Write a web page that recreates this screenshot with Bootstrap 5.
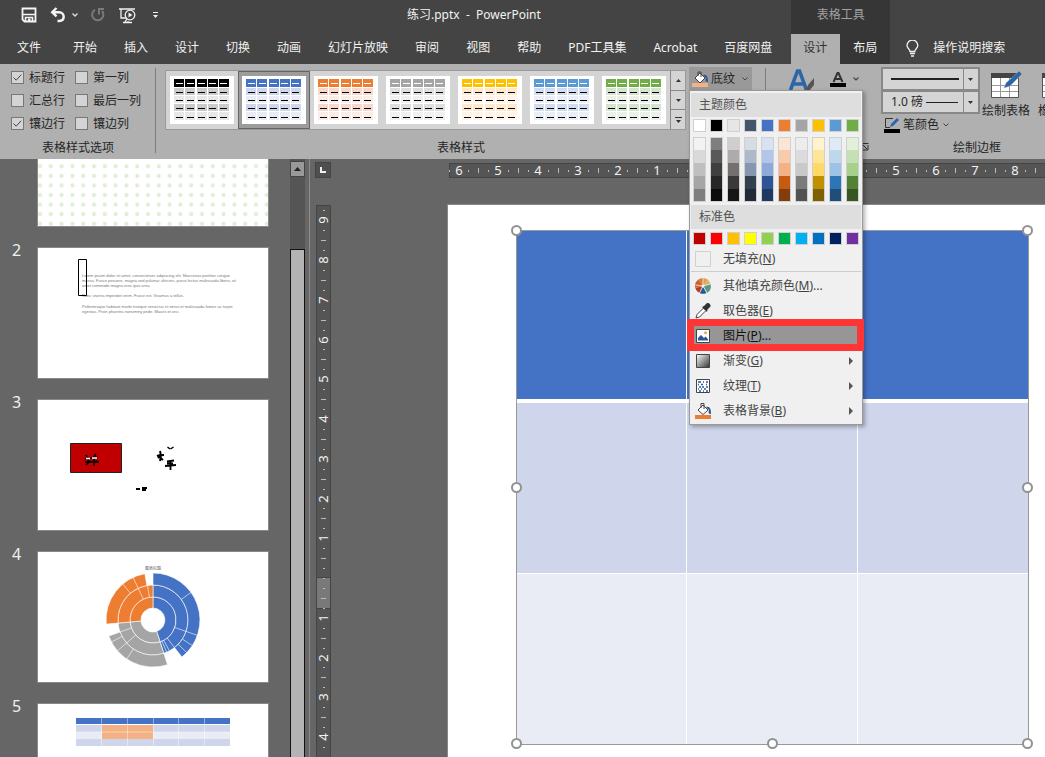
<!DOCTYPE html>
<html lang="zh-CN">
<head>
<meta charset="utf-8">
<meta name="viewport" content="width=device-width, initial-scale=1">
<title>练习.pptx - PowerPoint</title>
<link rel="stylesheet" href="https://cdn.jsdelivr.net/npm/bootstrap@5.3.0/dist/css/bootstrap.min.css">
<style>
:root{--chrome:#444;--ribbon:#b0b0b0;--desk:#666;--edge:#888;--soft:#d4d4d4}
body{font:12px/16px "Noto Sans","Noto Sans CJK SC",sans-serif;background:var(--desk);color:#262626}
button{font:inherit;color:inherit;border:0;background:none;padding:0}
svg{display:block;flex:none}
.app-head{background:var(--chrome);color:#f2f2f2}
.title-row{height:34px;padding:0 0 4px 20px}
.doc-title{margin-left:249px;white-space:pre}
.qat{gap:13px}
.tab-row{height:30px}
.main-tabs{padding-right:6px}
.tab-row .tab{display:flex;align-items:center;height:30px;padding:0 13px 2px 14px;color:inherit;text-decoration:none;white-space:nowrap}
.tab-row .tab.file-tab{padding:0 18px 2px 17px}
.context{background:#363636}
.context .title-row{padding-left:0;color:#a0a0a0}
.context .tab-row .tab{padding:0 13px 2px}
.context .tab-row .tab.on{padding-left:12px;background:var(--ribbon);color:#333}
.tell{gap:14px;padding:0 0 2px 16px}
.ribbon-bar{background:var(--ribbon);height:95px}
.rgroup{position:relative;flex:none;padding:3px 0}
.rgroup + .rgroup::before{content:"";position:absolute;left:-1px;top:4px;bottom:6px;width:1px;background:#7c7c7c}
.rlabel{height:16px;text-align:center;margin-top:auto;white-space:nowrap}
.g-options{width:156px}.g-styles{width:610px}.g-art{width:107px}
.opts{display:grid;grid-template-columns:64px 80px;padding-left:11px;margin-top:-1px}
.opts label{display:flex;align-items:center;gap:5px;height:23px;white-space:nowrap}
.opts input{appearance:none;width:13px;height:13px;margin:0;border:1px solid #777;background:var(--soft)}
.opts input:checked{background:var(--soft) url("data:image/svg+xml,%3Csvg xmlns='http://www.w3.org/2000/svg' viewBox='0 0 11 11'%3E%3Cpath d='M1.5 5.5l2.7 2.7 5-5.5' fill='none' stroke='%23444'/%3E%3C/svg%3E")}
.gallery{border:1px solid #999;background:var(--soft);height:60px;margin:3px 3px 0 9px}
.gallery .gal-item{width:72px;height:58px;padding:5px 4px;display:block}
.gallery .gal-item.on{background:#9c9c9c;outline:1px solid #666;outline-offset:-1px}
.gal-nav{border-left:1px solid #888;width:15px}
.gal-nav button{display:grid;place-items:center;flex:1}
.gal-nav button + button{border-top:1px solid #888}
.shade-btn{display:flex;align-items:center;gap:2px;background:#999;height:23px;width:63px;padding-left:3px;white-space:nowrap}
.fill-menu.dropdown-menu{display:block;left:0;top:23px;width:174px;min-width:0;padding:2px 1px 1px;margin:0;border:1px solid #999;border-radius:0;background:#f0f0f0;font-size:12px;color:#444;box-shadow:2px 2px 4px rgba(0,0,0,.3);z-index:20}
.menu-title{background:#dedede;height:24px;line-height:23px;padding-left:8px;color:#505050;margin:0;font-size:12px;font-weight:400}
.sw-row{display:flex;gap:4px;padding:2px 0 0 2px}
.sw-row.shades{padding:5px 0 3px 2px}
.sw-row.standard{padding:3px 0 1px 2px}
.sw-row .sw{width:13px;height:13px;border:1px solid #d0d0d0}
.shade-col{border:1px solid #d0d0d0;width:13px}
.shade-col .sh{display:block;width:11px;height:13px}
.shade-col .sh:first-child,.shade-col .sh:last-child{height:12px}
.fill-menu .fm{display:flex;align-items:center;width:100%;height:25px;padding:0 8px 0 4px;gap:12px;text-align:left;white-space:nowrap}
.fill-menu .fm .arr{margin-left:auto}
.fill-menu .fm.hot{position:relative;background:#969696;color:#111;z-index:1}
.fill-menu .fm.hot::after{content:"";position:absolute;left:-4px;right:-3px;top:-4px;bottom:-3px;border:7px solid #fd3535}
.fill-menu hr{margin:0 0 1px;opacity:1;color:#ccc}
.art-row{padding:1px 0 0 23px;gap:15px}
.pens{padding-left:8px}
.pen-color{gap:3px;padding:3px 0 0 3px}
.pen-sel{appearance:none;display:block;width:99px;height:24px;border:2px solid #888;border-radius:0;padding:0 0 0 8px;font:inherit;color:#262626;
 background:url("data:image/svg+xml,%3Csvg xmlns='http://www.w3.org/2000/svg' width='15' height='20'%3E%3Cpath d='M0 0h1v20H0z' fill='%23888'/%3E%3Cpath d='M5 9h5l-2.500 3z' fill='%23333'/%3E%3C/svg%3E") right center/15px 20px no-repeat,linear-gradient(#222,#222) 8px center/68px 2px no-repeat,var(--soft)}
.pen-sel.weight{background-size:15px 20px,32px 1px;background-position:right center,43px center;margin-top:-1px}
.tool-btn{display:flex;flex-direction:column;align-items:center;flex:none;gap:2px;padding:4px 2px 0;white-space:nowrap}
.ribbon-tail{flex:1 1 0;min-width:0;overflow:hidden}
.ribbon-tail .inner{width:208px}
.work{min-height:0}
.thumbs{width:290px;overflow:hidden}
.slide-line{display:flex;margin-bottom:20px}
.slide-line .no{width:37px;padding-left:12px;margin-top:-5px;font-size:16px;line-height:16px;color:#f0f0f0}
.slide-line .pic{border:1px solid #888;background:#fff;width:232px;height:132px;flex:none;padding:0}
.slide-line.cut .pic{height:68px;border-top:0}
.vbar{width:15px;background:#555;padding-top:2px}
.vbar .up{height:16px;width:15px;border:1px solid #444;background:#999;display:grid;place-items:center}
.vbar .grip{margin-top:72px;border:1px solid #111;background:#b3b3b3;border-bottom:0}
.split{width:5px;border-right:1px solid #8c8c8c}
.side-rule{padding:3px 0 0 5px;width:137px}
.corner{width:16px;height:16px;background:#4f4f4f;border:1px solid #444;display:grid;place-items:center}
.vruler{margin:27px 0 0 1px;width:15px;min-height:0;background:#555;border:solid #444;border-width:1px 1px 0}
.stage{min-width:0;overflow:hidden}
.hruler{margin:4px 0 0 2px;height:15px;background:#555;border:solid #444;border-width:1px 0 1px 1px}
.rule{overflow:visible}
.rule text{font:13px "Noto Sans",sans-serif;fill:#f2f2f2;text-anchor:middle}
.page{margin-top:26px;border:solid #888;border-width:1px 0 0 1px;background:#fff;padding:26px 17px 40px 69px}
.tbl-frame{position:relative}
.deck-table{width:100%;border-collapse:separate;border-spacing:0;table-layout:fixed;outline:1px solid #999}
.deck-table th,.deck-table td{padding:0;height:171px;border-right:1px solid #fff}
.deck-table th{background:#4472c4;border-bottom:4px solid #fff;height:172px}
.deck-table td{background:#cfd5ea;height:170px}
.deck-table tr:last-child td{background:#e9ebf5;border-top:1px solid #fff;height:171px}
.deck-table tr > :last-child{border-right:0}
.knob{position:absolute;width:11px;height:11px;margin:-6px 0 0 -6px;border:2px solid #929292;border-radius:50%;background:#fff}
.x0{left:0}.x1{left:50%}.x2{left:100%}.y0{top:0}.y1{top:50%}.y2{top:100%}
</style>
</head>
<body class="d-flex flex-column vh-100 overflow-hidden">

<header class="app-head d-flex flex-shrink-0">
  <div>
    <div class="title-row d-flex align-items-center">
      <div class="qat d-flex align-items-center">
        <button aria-label="保存"><svg width="17" height="16" viewBox="0 0 17 16"><path d="M2.500 1.500h13v13h-11l-2-2z" fill="none" stroke="#f5f5f5" stroke-width="1.800"/><path d="M3 7.500h12M5.500 14v-3.500h7V14" fill="none" stroke="#f5f5f5" stroke-width="1.600"/><path d="M8 11.500h2.500V15H8z" fill="#f5f5f5"/></svg></button>
        <button aria-label="撤消" class="d-flex align-items-center"><svg width="28" height="16" viewBox="0 0 28 16"><path d="M6.500 1L2.200 5.200l4.300 4.200M2.500 5.200h6.500c6 0 6.500 8.300 0 8.800H7.500" fill="none" stroke="#f5f5f5" stroke-width="2.400"/><path d="M22.500 6.500l2.500 2.500 2.500-2.500" fill="none" stroke="#ddd" stroke-width="1.300"/></svg></button>
        <button aria-label="重复"><svg width="15" height="16" viewBox="0 0 15 16"><path d="M4 2.800A5.600 5.600 0 1 0 11 4M8 7.500V2h5" fill="none" stroke="#7a7a7a" stroke-width="2"/></svg></button>
        <button aria-label="从头开始"><svg width="17" height="17" viewBox="0 0 17 17"><path d="M0 2h16M2 2v9h5M9 14v1M4 15.500h9M6 15l2-3" fill="none" stroke="#f0f0f0" stroke-width="1.300"/><circle cx="11" cy="8" r="4.800" fill="#444" stroke="#f0f0f0" stroke-width="1.300"/><path d="M9.500 5.500v5l4-2.500z" fill="#f0f0f0"/></svg></button>
        <button aria-label="自定义快速访问工具栏" class="ps-1"><svg width="5" height="8" viewBox="0 0 5 8"><path d="M0 1.500h5" stroke="#f0f0f0"/><path d="M0 4h5L2.500 7z" fill="#f0f0f0"/></svg></button>
      </div>
      <div class="doc-title">练习.pptx  -  PowerPoint</div>
    </div>
    <nav class="tab-row main-tabs d-flex">
      <a href="#" class="tab file-tab">文件</a><a href="#" class="tab">开始</a><a href="#" class="tab">插入</a><a href="#" class="tab">设计</a><a href="#" class="tab">切换</a><a href="#" class="tab">动画</a><a href="#" class="tab">幻灯片放映</a><a href="#" class="tab">审阅</a><a href="#" class="tab">视图</a><a href="#" class="tab">帮助</a><a href="#" class="tab">PDF工具集</a><a href="#" class="tab">Acrobat</a><a href="#" class="tab">百度网盘</a>
    </nav>
  </div>
  <div class="context">
    <div class="title-row d-flex align-items-center justify-content-center">表格工具</div>
    <nav class="tab-row d-flex"><a href="#" class="tab on" aria-current="page">设计</a><a href="#" class="tab">布局</a></nav>
  </div>
  <div class="flex-fill d-flex flex-column justify-content-end">
    <button class="tab-row tell d-flex align-items-center"><svg width="13" height="17" viewBox="0 0 13 17"><path d="M4 11.500C4 9 1 8.500 1 5.500a5.300 5.300 0 0 1 10.800 0c0 3-3 3.500-3 6zM4 13.500h5M5 16h3" fill="none" stroke="#f2f2f2" stroke-width="1.300"/></svg>操作说明搜索</button>
  </div>
</header>

<section class="ribbon-bar d-flex flex-shrink-0" aria-label="功能区">
  <div class="rgroup g-options d-flex flex-column">
    <div class="opts">
      <label><input type="checkbox" checked>标题行</label><label><input type="checkbox">第一列</label>
      <label><input type="checkbox">汇总行</label><label><input type="checkbox">最后一列</label>
      <label><input type="checkbox" checked>镶边行</label><label><input type="checkbox">镶边列</label>
    </div>
    <div class="rlabel">表格样式选项</div>
  </div>
  <div class="rgroup g-styles d-flex flex-column">
    <div class="d-flex align-items-start">
      <div class="gallery d-flex"><div class="d-flex" id="gallery"></div>
        <div class="gal-nav d-flex flex-column">
          <button aria-label="上一行"><svg width="5" height="3"><path d="M0 3h5L2.500 0z" fill="#333"/></svg></button>
          <button aria-label="下一行"><svg width="5" height="3"><path d="M0 0h5L2.500 3z" fill="#333"/></svg></button>
          <button aria-label="其他"><svg width="7" height="6"><path d="M0 0h7v1H0zM1 3h5L3.500 6z" fill="#333"/></svg></button>
        </div>
      </div>
      <div class="position-relative">
        <button class="shade-btn" aria-expanded="true"><svg width="17" height="16" viewBox="0 0 17 16"><path d="M0 12h16v4H0z" fill="#f4b183"/><path d="M3 7l5-5 5 5-5 5z" fill="#fff" stroke="#444"/><path d="M6 5V1h3v5" fill="none" stroke="#444"/><path d="M11 4c4-1 5 2 5 7-2 0-3-1-2-4z" fill="#2b579a"/></svg>底纹<svg width="16" height="6"><path d="M5.500 1.500L8 4l2.500-2.500" fill="none" stroke="#444"/></svg></button>
        <div class="dropdown-menu fill-menu show">
          <h6 class="menu-title">主题颜色</h6>
          <div class="sw-row" id="theme"></div>
          <div class="sw-row shades" id="shades"></div>
          <h6 class="menu-title">标准色</h6>
          <div class="sw-row standard" id="standard"></div>
          <button class="fm"><svg width="16" height="16"><path d="M.5.500h15v15H.5z" fill="#f0f0f0" stroke="#d0d0d0"/></svg><span>无填充(<u>N</u>)</span></button>
          <hr>
          <button class="fm"><svg width="16" height="16" viewBox="0 0 16 16"><path d="M8 8L3.300 1.500A8 8 0 0 1 8 0z" fill="#d9822b"/><path d="M8 8V0a8 8 0 0 1 5 1.700z" fill="#e0a050"/><path d="M8 8l5-6.300A8 8 0 0 1 15.500 6z" fill="#e0b070"/><path d="M8 8l7.500-2a8 8 0 0 1-3.500 9z" fill="#5a9a80"/><path d="M8 8l3.500 7a8 8 0 0 1-7 0z" fill="#2b579a"/><path d="M8 8l-3.500 7A8 8 0 0 1 .3 10z" fill="#b04020"/><path d="M8 8L.3 10A8 8 0 0 1 3.300 1.500z" fill="#d06030"/><path d="M8 8V0M8 8l7.500-2M8 8l4 7M8 8l-3.500 7M8 8L.3 7" stroke="#f0f0f0" stroke-width=".8"/><circle cx="8" cy="8" r="1.500" fill="#f0f0f0"/></svg><span>其他填充颜色(<u>M</u>)...</span></button>
          <button class="fm"><svg width="16" height="16" viewBox="0 0 16 16"><path d="M1 15l1-3.500 6.500-6.500 2.500 2.500L4.500 14z" fill="#fff" stroke="#444"/><path d="M7 4l2-1 3-3c2-.5 4 1.500 3.500 3.500L12.500 6.500 12 9z" fill="#333"/></svg><span>取色器(<u>E</u>)</span></button>
          <button class="fm hot"><svg width="16" height="16" viewBox="0 0 16 16"><path d="M1.500 1.500h13v13h-13z" fill="#fff" stroke="#444"/><path d="M3 12.500V10l3-3 3 3 1.500-1.500L13 11v1.500z" fill="#2b579a"/><circle cx="10.500" cy="4.800" r="1.500" fill="#e8a84c"/></svg><span>图片(<u>P</u>)...</span></button>
          <button class="fm"><svg width="16" height="16" viewBox="0 0 16 16"><defs><linearGradient id="gr" x2="1" y2="1"><stop stop-color="#fff"/><stop offset="1" stop-color="#333"/></linearGradient></defs><path d="M1.500 1.500h13v13h-13z" fill="url(#gr)" stroke="#444"/></svg><span>渐变(<u>G</u>)</span><svg class="arr" width="4" height="8"><path d="M0 0v8l4-4z" fill="#555"/></svg></button>
          <button class="fm"><svg width="16" height="16" viewBox="0 0 16 16"><path d="M1.500 1.500h13v13h-13z" fill="#fff" stroke="#444"/><path d="M3 4h3m2 0h1m2 0h2M3 6.500h1m2 0h2m3 0h1M4 9h2m1 0h2m2 0h2M3 11h1m2 0h1m2 0h2M4 13h2m2 0h1m2 0h2" stroke="#2b579a" stroke-width="1.400"/></svg><span>纹理(<u>T</u>)</span><svg class="arr" width="4" height="8"><path d="M0 0v8l4-4z" fill="#555"/></svg></button>
          <button class="fm"><svg width="16" height="16" viewBox="0 0 16 16"><path d="M0 12h16v4H0z" fill="#ed7d31"/><path d="M3 7l5-5 5 5-5 4.500z" fill="#fff" stroke="#444"/><path d="M6 5V.5h3V6" fill="none" stroke="#444"/><path d="M11 4c4-1 5 2 5 7-2 0-3-1-2-4z" fill="#2b579a"/></svg><span>表格背景(<u>B</u>)</span><svg class="arr" width="4" height="8"><path d="M0 0v8l4-4z" fill="#555"/></svg></button>
        </div>
      </div>
    </div>
    <div class="rlabel">表格样式</div>
  </div>
  <div class="rgroup g-art d-flex flex-column justify-content-between">
    <div class="art-row d-flex align-items-start">
      <button aria-label="快速样式"><svg width="26" height="28" viewBox="0 0 26 28"><path d="M1.500 22L8.500 3h2l7 19M4.500 16h10" fill="none" stroke="#2b66a8" stroke-width="3.600"/><path d="M15 22c2-1 3-2 4-5l6-7v7l-5 6z" fill="#555"/></svg></button>
      <button aria-label="文本填充" class="pt-1"><svg width="30" height="16" viewBox="0 0 30 16"><path d="M3.500 10L7.500 1h1l4 9M5 7h6" fill="none" stroke="#333" stroke-width="2"/><path d="M0 11h16v4H0z" fill="#000"/><path d="M23.500 5.500L26 8l2.500-2.500" fill="none" stroke="#444" stroke-width="1.200"/></svg></button>
    </div>
    <button aria-label="艺术字样式选项" class="align-self-end pe-1 pb-1"><svg width="7" height="9" viewBox="0 0 7 9"><path d="M0 .5h6.500M1 2l4.500 4.500M6 2v5H1" fill="none" stroke="#333"/></svg></button>
  </div>
  <div class="rgroup ribbon-tail">
    <div class="inner d-flex flex-column h-100">
      <div class="d-flex">
        <div class="pens flex-shrink-0">
          <select class="pen-sel" aria-label="笔样式"><option value="solid"></option></select>
          <select class="pen-sel weight" aria-label="笔划粗细"><option>1.0 磅</option></select>
          <button class="pen-color d-flex align-items-center"><svg width="16" height="16" viewBox="0 0 16 16"><path d="M9 1.500H1.500v9H6" fill="none" stroke="#333"/><path d="M6 10l1-3 6-6 2 2-6 6z" fill="#2b66a8"/><path d="M0 12h16v4H0z" fill="#000"/></svg>笔颜色<svg width="8" height="6"><path d="M1.500 1.500L4 4l2.500-2.500" fill="none" stroke="#444"/></svg></button>
        </div>
        <button class="tool-btn"><svg width="34" height="30" viewBox="0 0 34 30"><path d="M2.500 4h27v22.500h-27z" fill="#fff" stroke="#555"/><path d="M2 2h28v5H2z" fill="#444"/><path d="M3 14.500h26M3 20.500h26M11.500 7v19M20.500 7v19" stroke="#999"/><path d="M15 17l2-5L30 0l3 3-12 12z" fill="#2b66a8" stroke="#b0b0b0" stroke-width=".5"/></svg><span>绘制表格</span></button>
        <button class="tool-btn ms-1"><svg width="28" height="30" viewBox="0 0 28 30"><path d="M.5 4h26v22.500H.5z" fill="#fff" stroke="#555"/><path d="M0 2h27v5H0z" fill="#444"/><path d="M1 14.500h25M1 20.500h25" stroke="#999"/></svg><span>橡皮擦</span></button>
      </div>
      <div class="rlabel">绘制边框</div>
    </div>
  </div>
</section>

<main class="work d-flex flex-fill">
  <aside class="thumbs flex-shrink-0" aria-label="幻灯片">
    <div class="slide-line cut"><span class="no"></span><button class="pic" aria-label="幻灯片 1"><svg width="230" height="67"><defs><pattern id="dots" width="10.800" height="9.570" patternUnits="userSpaceOnUse" x="-3.400" y="2.500"><circle cx="5.400" cy="4.800" r="2.100" fill="#dfeed6"/></pattern></defs><path d="M0 0h230v67H0z" fill="url(#dots)"/></svg></button></div>
    <div class="slide-line"><span class="no">2</span><button class="pic" aria-label="幻灯片 2"><svg width="230" height="130" font-family="Liberation Sans, sans-serif" font-size="4" fill="#777"><text x="44" y="29">Lorem ipsum dolor sit amet, consectetuer adipiscing elit. Maecenas porttitor congue</text><text x="44" y="34">massa. Fusce posuere, magna sed pulvinar ultricies, purus lectus malesuada libero, sit</text><text x="44" y="39">amet commodo magna eros quis urna.</text><text x="44" y="49">Nunc viverra imperdiet enim. Fusce est. Vivamus a tellus.</text><text x="44" y="60">Pellentesque habitant morbi tristique senectus et netus et malesuada fames ac turpis</text><text x="44" y="65">egestas. Proin pharetra nonummy pede. Mauris et orci.</text><path d="M40.500 11.500h8v36h-8z" fill="none" stroke="#000"/></svg></button></div>
    <div class="slide-line"><span class="no">3</span><button class="pic" aria-label="幻灯片 3"><svg width="230" height="130" fill="none" stroke="#000" stroke-width="1.500"><path d="M32.500 43.500h51v29h-51z" fill="#c00000" stroke="#222" stroke-width="1"/><path d="M47 59l12-2M47 62l13-1M48 55l3 7M58 54l-3 4M56 58v8M48 65l4-4M53 62h8"/><path d="M48 58.500h4M54 58h5" stroke="#fff" stroke-width="1.300"/><path d="M129.500 47l2.500 2M135.500 47l-3 2" stroke-width="1.500"/><path d="M119 56c2-1 4-1 7-1M122 51c1 3 1 4-2 7M120 56l5 4M123 56l-1 5" stroke-width="2"/><path d="M129 61.500l7-1M129 63.500h6M127 66l11-1M132.500 60v10" stroke-width="1.800"/><path d="M98 89h4M104 88h5M104 90h4" stroke-width="2"/></svg></button></div>
    <div class="slide-line"><span class="no">4</span><button class="pic" aria-label="幻灯片 4"><svg width="230" height="130" id="burst"><text x="115" y="18" text-anchor="middle" font-size="4" fill="#666">图表标题</text></svg></button></div>
    <div class="slide-line"><span class="no">5</span><button class="pic" aria-label="幻灯片 5"><svg width="230" height="130"><path d="M38 14h154v6H38z" fill="#4472c4"/><path d="M38 21h154v7H38zM38 35h154v7H38z" fill="#cfd5ea"/><path d="M38 28h154v7H38z" fill="#e9ebf5"/><path d="M64 21h51v14H64z" fill="#f4b183"/><path d="M63.500 14v28M89.500 14v28M115.500 14v28M140.500 14v28M166.500 14v28M38 28h154" stroke="#fff" stroke-opacity=".6" stroke-width=".7"/></svg></button></div>
  </aside>
  <div class="vbar d-flex flex-column flex-shrink-0"><button class="up" aria-label="向上滚动"><svg width="7" height="4"><path d="M0 4h7L3.500 0z" fill="#222"/></svg></button><div class="grip flex-fill"></div></div>
  <div class="split flex-shrink-0"></div>
  <div class="side-rule d-flex flex-column flex-shrink-0">
    <div class="corner"><svg width="6" height="6"><path d="M1 0v5h5" fill="none" stroke="#f0f0f0" stroke-width="2"/></svg></div>
    <div class="vruler flex-fill"><svg class="rule" width="13" height="540" id="vrule"></svg></div>
  </div>
  <div class="stage flex-fill">
    <div class="hruler"><svg class="rule" width="100%" height="13" id="hrule"></svg></div>
    <div class="page">
      <div class="tbl-frame">
        <table class="deck-table" aria-label="幻灯片表格"><thead><tr><th></th><th></th><th></th></tr></thead><tbody><tr><td></td><td></td><td></td></tr><tr><td></td><td></td><td></td></tr></tbody></table>
        <i class="knob x0 y0"></i><i class="knob x1 y0"></i><i class="knob x2 y0"></i><i class="knob x0 y1"></i><i class="knob x2 y1"></i><i class="knob x0 y2"></i><i class="knob x1 y2"></i><i class="knob x2 y2"></i>
      </div>
    </div>
  </div>
</main>

<script src="https://cdn.jsdelivr.net/npm/bootstrap@5.3.0/dist/js/bootstrap.bundle.min.js"></script>
<script>
const $ = id => document.getElementById(id);

// table style gallery: header colour, banded row, plain row
$('gallery').innerHTML = [['#000','#cbcbcb','#e7e7e7'],['#4472c4','#cfd5ea','#e9ebf5'],['#ed7d31','#f8d7cd','#fcece8'],['#a5a5a5','#dedede','#f0f0f0'],['#ffc000','#ffe8cb','#fff4e7'],['#5b9bd5','#d2deef','#eaeff7'],['#70ad47','#d5e3cf','#ebf1e9']]
  .map(([h, a, b], n) => {
    let s = '<path d="M0 0h64v48H0z" fill="#fff"/>';
    [[3, 8, h, 7], [12, 7, a, 16], [20, 7, b, 24], [28, 7, a, 32], [36, 8, b, 41]].forEach(([y, t, c, d], r) => {
      for (let i = 0; i < 5; i++) s += `<path d="M${4 + 11 * i + (i > 1)} ${y}h10v${t}h-10z" fill="${c}"/><path d="M${6 + 11 * i} ${d}h7v1h-7z" fill="${r ? '#000' : '#fff'}"/>`;
    });
    return `<button class="gal-item${n === 1 ? ' on' : ''}" aria-label="表格样式 ${n + 1}"><svg width="64" height="48">${s}</svg></button>`;
  }).join('');

// colour palettes
const sw = c => `<button class="sw" style="background:${c}" aria-label="${c}"></button>`;
$('theme').innerHTML = ['#fff','#000','#e7e6e6','#44546a','#4472c4','#ed7d31','#a5a5a5','#ffc000','#5b9bd5','#70ad47'].map(sw).join('');
$('standard').innerHTML = ['#c00000','#f00','#ffc000','#ff0','#92d050','#00b050','#00b0f0','#0070c0','#002060','#7030a0'].map(sw).join('');
$('shades').innerHTML = ['f2f2f2 d9d9d9 bfbfbf a6a6a6 7f7f7f','7f7f7f 595959 3f3f3f 262626 0c0c0c','d0cece aeabab 757070 3a3838 171616','d6dce4 adb9ca 8496b0 323f4f 222a35','d9e2f3 b4c6e7 8eaadb 2f5496 1f3864','fbe5d5 f7cbac f4b183 c55a11 833c0b','ededed dbdbdb c9c9c9 7b7b7b 525252','fff2cc fee599 ffd965 bf9000 7f6000','deebf6 bdd7ee 9cc3e5 2e75b5 1e4e79','e2efd9 c5e0b3 a8d08d 538135 375623']
  .map(l => `<div class="shade-col">${l.split(' ').map(c => `<button class="sh" style="background:#${c}" aria-label="#${c}"></button>`).join('')}</div>`).join('');

// rulers: a number each unit, a dash at the half, dots at the quarters
function ruler(zero, unit, from, to, vertical) {
  let s = '';
  for (let q = from * 4; q <= to * 4; q++) {
    const p = Math.round(zero + q * unit / 4), k = Math.abs(q) % 4;
    if (k === 0 && q !== 0) s += vertical ? `<text transform="translate(11 ${p}) rotate(-90)">${Math.abs(q / 4)}</text>` : `<text x="${p}" y="11">${Math.abs(q / 4)}</text>`;
    else { const l = k === 2 ? 5 : 2, a = k === 2 ? 4 : 6; s += vertical ? `<path d="M${a} ${p}h${l}v1h-${l}z" fill="#bbb"/>` : `<path d="M${p} ${a}h1v${l}h-1z" fill="#bbb"/>`; }
  }
  return s;
}
$('hrule').innerHTML = ruler(247, 39.75, -6.25, 9);
$('vrule').innerHTML = '<path d="M0 371h13v32H0z" fill="#797979"/><path d="M0 371h13v1H0zM0 402h13v1H0z" fill="#444"/>' + ruler(372, 39.75, -9.25, 4.25, true);

// sunburst: [inner, outer, start, end, colour], then divider spokes
const B = '#4472c4', G = '#a5a5a5', O = '#ed7d31';
const pt = (r, a) => [115 + r * Math.sin(a * Math.PI / 180), 68 - r * Math.cos(a * Math.PI / 180)].map(v => v.toFixed(1)).join(' ');
let burst = '';
[[12,23,0,162,B],[12,23,162,265,G],[12,23,265,360,O],[23,35,0,162,B],[23,35,162,265,G],[23,35,265,360,O],[35,47,0,142,B],[35,47,162,250,G],[35,47,265,350,O]].forEach(([r, R, a, b, c]) => {
  const f = b - a > 180 ? 1 : 0;
  burst += `<path d="M${pt(r, a)}L${pt(R, a)}A${R} ${R} 0 ${f} 1 ${pt(R, b)}L${pt(r, b)}A${r} ${r} 0 ${f} 0 ${pt(r, a)}z" fill="${c}" stroke="#fff" stroke-width=".6"/>`;
});
[[35,47,54],[23,47,109],[35,47,123],[35,47,134],[23,35,142],[23,35,152],[23,35,157],[35,47,214],[23,47,229],[35,47,242],[23,35,250],[35,47,320],[23,47,335],[23,35,351]].forEach(([r, R, a]) => {
  burst += `<path d="M${pt(r, a)}L${pt(R, a)}" stroke="#fff" stroke-width=".6"/>`;
});
$('burst').innerHTML += burst;
</script>
</body>
</html>
